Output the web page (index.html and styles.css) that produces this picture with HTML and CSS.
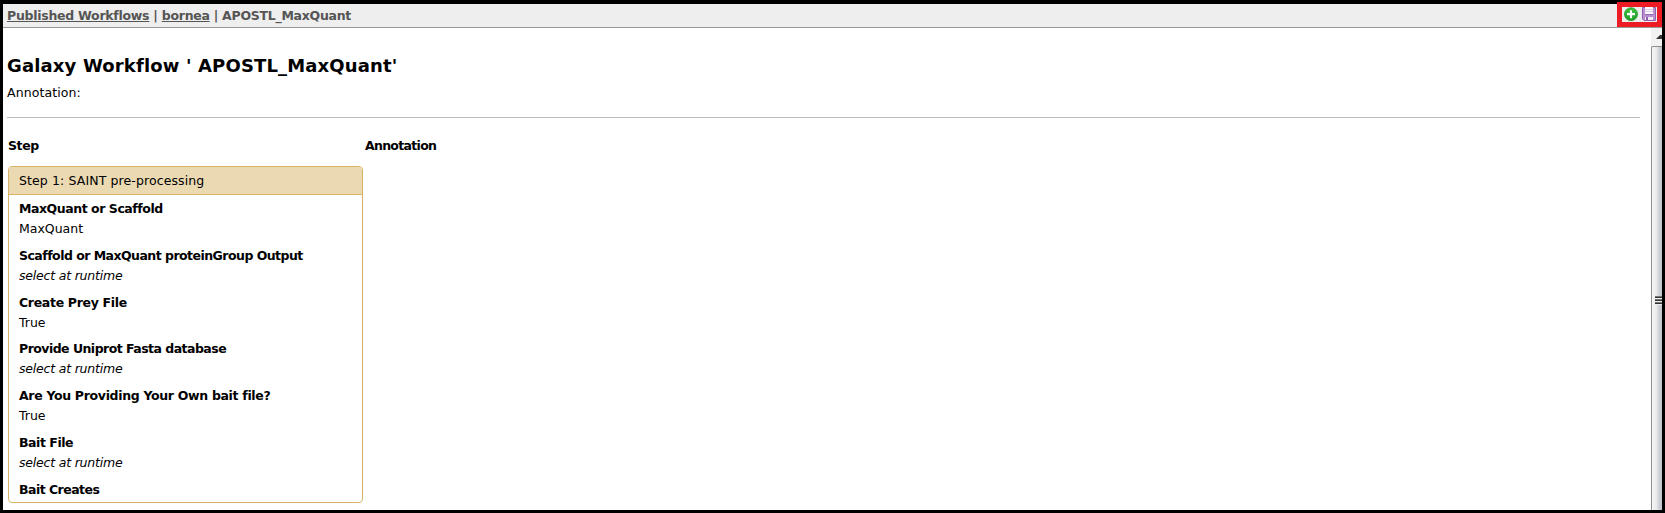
FILE: index.html
```
<!DOCTYPE html>
<html lang="en">
<head>
<meta charset="utf-8">
<title>Galaxy Workflow</title>
<link rel="stylesheet" href="styles.css">
</head>
<body>
<div class="window">
  <header class="topbar">
    <nav class="crumbs"><a>Published Workflows</a> | <a>bornea</a> | APOSTL_MaxQuant</nav>
    <div class="actions">
      <svg class="icon" width="15" height="15" viewBox="0 0 15 15">
        <defs><linearGradient id="green" x1="0" y1="0" x2="0" y2="1"><stop offset="0" stop-color="#3fc43f"/><stop offset="1" stop-color="#1e9d28"/></linearGradient></defs>
        <circle cx="7" cy="7.2" r="6.5" fill="url(#green)" stroke="#279b2d" stroke-width=".8"/>
        <path d="M7 3.2v8M3 7.2h8" stroke="#fff" stroke-width="2.2"/>
      </svg>
      <svg class="icon" width="15" height="15" viewBox="0 0 15 15">
        <path d="M.5.5h13v13H2L.5 12z" fill="#b98fd0" stroke="#8f5fae"/>
        <path d="M3 0h8v7H3z" fill="#faf8fc"/>
        <path d="M3 2.5h8M3 4.5h8" stroke="#d9cbe3"/>
        <path d="M3 7.5h8" stroke="#9565b3"/>
        <path d="M3 10h8v3H3z" fill="#f1e9f5"/>
        <path d="M4 10h2v3H4z" fill="#8f5fae"/>
      </svg>
    </div>
  </header>
  <div class="view">
    <main class="page">
      <h1>Galaxy Workflow ' APOSTL_MaxQuant'</h1>
      <p class="note">Annotation:</p>
      <hr>
      <div class="columns"><b class="col-step">Step</b><b class="col-note">Annotation</b></div>
      <section class="card">
        <div class="card-title"><span>Step 1: SAINT pre-processing</span></div>
        <dl class="params">
          <div class="param"><dt>MaxQuant or Scaffold</dt><dd>MaxQuant</dd></div>
          <div class="param"><dt class="tight">Scaffold or MaxQuant proteinGroup Output</dt><dd><i>select at runtime</i></dd></div>
          <div class="param"><dt class="loose">Create Prey File</dt><dd>True</dd></div>
          <div class="param"><dt class="tight">Provide Uniprot Fasta database</dt><dd><i>select at runtime</i></dd></div>
          <div class="param"><dt class="loose">Are You Providing Your Own bait file?</dt><dd>True</dd></div>
          <div class="param"><dt>Bait File</dt><dd><i>select at runtime</i></dd></div>
          <div class="param"><dt class="tight">Bait Creates</dt></div>
        </dl>
      </section>
    </main>
    <div class="scrollbar">
      <div class="scroll-up"><svg width="6" height="4" viewBox="0 0 6 4"><path d="M0 4L4 0h2v4z" fill="#333"/></svg></div>
      <div class="thumb"><div class="grip"></div></div>
    </div>
  </div>
</div>
</body>
</html>
```
FILE: styles.css
```
* { box-sizing: border-box; }
body {
  margin: 0;
  font: 12.5px/20px Verdana, "DejaVu Sans", sans-serif;
  color: #000;
}
.window {
  width: 1665px;
  height: 513px;
  border: solid #000;
  border-width: 4px 3px 3px;
  background: #fff;
  display: flex;
  flex-direction: column;
}
.topbar {
  height: 24px;
  flex: none;
  background: #eee;
  border-bottom: 1px solid #999;
  display: flex;
  justify-content: space-between;
  padding-left: 4px;
}
.crumbs { font-weight: bold; color: #555; line-height: 23px; letter-spacing: -.27px; }
.crumbs a { text-decoration: underline; }
.actions {
  width: 45px;
  height: 25px;
  margin-top: -2px;
  border: 5px solid #ed1c24;
  background: #eee;
  display: flex;
  justify-content: space-between;
  padding: 0 0 0 2px;
  position: relative;
}
.icon { display: block; }
.view { flex: 1; display: flex; min-height: 0; }
.page { flex: 1; padding: 27px 11px 0 4px; }
h1 { margin: 0; font-size: 18px; line-height: 22px; letter-spacing: .15px; }
.note { margin: 6px 0 0; letter-spacing: .1px; }
hr { margin: 14px 0 0; border: 0; background: #bbb; height: 1px; }
.columns { display: flex; padding: 18px 0 0 1px; height: 48px; }
.columns b { letter-spacing: -.7px; }
.columns .col-step { width: 357px; letter-spacing: -.4px; }
.card {
  width: 355px;
  height: 337px;
  margin-left: 1px;
  border: 1px solid #d8b365;
  border-radius: 4px;
  overflow: hidden;
}
.card-title {
  height: 28px;
  background: #ebd9b2;
  border-bottom: 1px solid #d8b365;
  padding-left: 10px;
  line-height: 27px;
  letter-spacing: .11px;
}
.params { margin: 0; padding: 4px 10px 0; }
.param { height: 46.8px; }
dt { font-weight: bold; line-height: 20px; letter-spacing: -.45px; }
dt.tight { letter-spacing: -.53px; }
dt.loose { letter-spacing: -.32px; }
dd { margin: 0; line-height: 19.6px; }
dd i { letter-spacing: -.2px; }
.scrollbar { width: 11px; display: flex; flex-direction: column; }
.scroll-up {
  height: 18px;
  background: #f2f2f2;
  display: flex;
  align-items: center;
  justify-content: flex-end;
}
.thumb {
  flex: 1;
  border: 1px solid #8f8f8f;
  border-width: 1px 0 0 1px;
  border-top-left-radius: 2px;
  background: linear-gradient(90deg, #f6f6f6, #e8e8ea 50%, #d2d4da 65%, #bfc3cc);
  display: flex;
  align-items: center;
  justify-content: flex-end;
  padding-top: 44px;
}
.grip {
  width: 7px;
  height: 9px;
  background: repeating-linear-gradient(#777 0 1px, #333 1px 2px, #eee 2px 3px);
}
```
